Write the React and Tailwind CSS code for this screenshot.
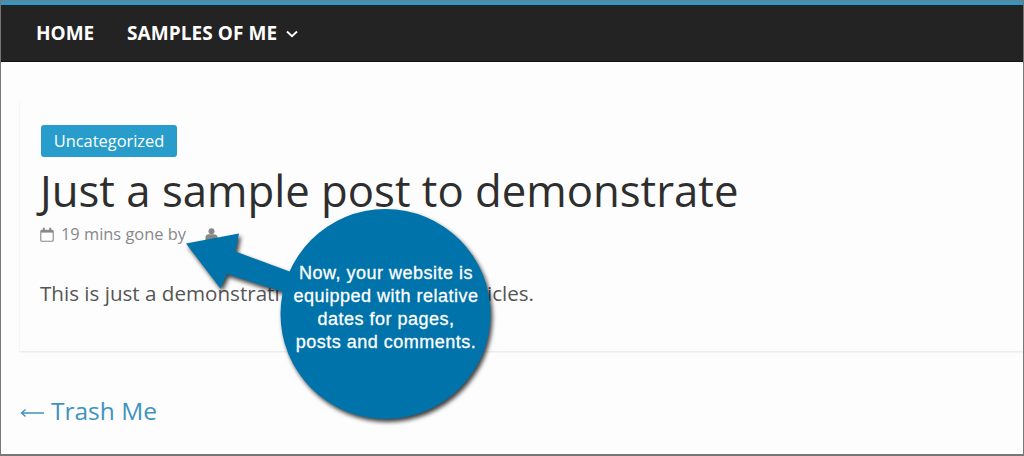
import React from 'react';

const CalendarIcon = () => (
    <svg width="14" height="15" viewBox="0 0 14 15" fill="none" stroke="#888" strokeWidth="1.1">
        <rect x="0.8" y="3.2" width="12.4" height="11" rx="1" />
        <path d="M1 4.4h12" strokeWidth="2.4" />
        <path d="M3.8 0.8v3M10.2 0.8v3" strokeWidth="2" />
    </svg>
);

const UserIcon = () => (
    <svg width="13" height="15" viewBox="0 0 13 15" fill="#888">
        <circle cx="6.5" cy="4.2" r="3" />
        <path d="M0.5 14V10.500c0-2.2 1.6-3.2 3.5-3.2h5c1.9 0 3.5 1 3.5 3.2v4z" />
    </svg>
);

const NavBar = () => (
    <nav className="flex h-[60px] items-center border-t-[3px] border-b border-t-[#3399c0] border-b-[#111] bg-[#232323] pt-[1px] pl-[35px] text-[19px] font-bold text-white">
        <a className="w-[91px] whitespace-nowrap">HOME</a>
        <a className="flex items-center whitespace-nowrap">
            <span className="tracking-[0.08px]">SAMPLES OF ME</span>
            <svg className="mt-px ml-[9px]" width="12" height="8" viewBox="0 0 12 8" fill="none" stroke="#fff" strokeWidth="1.9">
                <path d="M1 1.5l5 4.7 5-4.7" />
            </svg>
        </a>
    </nav>
);

const Callout = () => (
    <div className="absolute top-[208px] left-[178px] h-[220px] w-[320px]">
        <svg
            className="absolute inset-0 drop-shadow-[2px_3px_2px_rgba(0,0,0,0.75)]"
            width="320"
            height="220"
            viewBox="180 208 320 220"
            fill="#0073aa"
        >
            <path d="M187 243.5L240 233.5L236.500 251.500L300 275V297L228 274L221.500 288.500z" />
            <circle cx="386.500" cy="314" r="105" />
        </svg>
        <p className="absolute top-[54px] left-[106px] w-[202px] text-center font-['Liberation_Sans',sans-serif] text-[18px] leading-[23px] tracking-[0.5px] whitespace-nowrap text-white [-webkit-text-stroke:0.3px_white]">
            Now, your website is
            <br />
            equipped with relative
            <br />
            dates for pages,
            <br />
            posts and comments.
        </p>
    </div>
);

const App = () => {
    return (
        <div className="relative h-[456px] w-[1024px] overflow-hidden border border-t-0 border-b-2 border-[#777] bg-[#fdfdfd] font-['Open_Sans',sans-serif]">
            <div className="h-[2px] bg-[#5389a2]" />
            <NavBar />

            <article className="mt-[38px] -mr-4 ml-[19px] h-[251px] bg-[#fdfdfd] px-5 pt-[25px] shadow-[0_1px_2px_0_rgba(0,0,0,0.1)]">
                <span className="ml-px flex h-[32px] w-[136px] items-center justify-center rounded-[3px] bg-[#289dcc] text-[16.4px] text-white">
                    Uncategorized
                </span>
                <h1 className="mt-[4px] text-[43.7px] leading-[58px] whitespace-nowrap text-[#2e2e2e]">
                    Just a sample post to demonstrate
                </h1>
                <div className="mt-[3px] flex h-6 items-center text-[16.4px] text-[#888]">
                    <CalendarIcon />
                    <span className="ml-[7px] w-[144px] whitespace-nowrap">19 mins gone by</span>
                    <UserIcon />
                </div>
                {/* The callout bubble sits in the gap */}
                <p className="mt-[33px] flex w-[494px] justify-between text-[20.6px] leading-[28px] whitespace-nowrap text-[#555]">
                    <span>This is just a demonstrati</span>
                    <span>icles.</span>
                </p>
            </article>

            <a className="mt-[43px] ml-[19px] flex items-center text-[24.5px] leading-[34px] text-[#4093bf]">
                <svg className="mt-1 mr-[7px]" width="24" height="10" viewBox="0 0 24 10" fill="none" stroke="currentColor" strokeWidth="1.400">
                    <path d="M24 5H2M5.500 1.500L1.500 5L5.500 8.500" />
                </svg>
                Trash Me
            </a>

            <Callout />
        </div>
    );
};

export default App;
